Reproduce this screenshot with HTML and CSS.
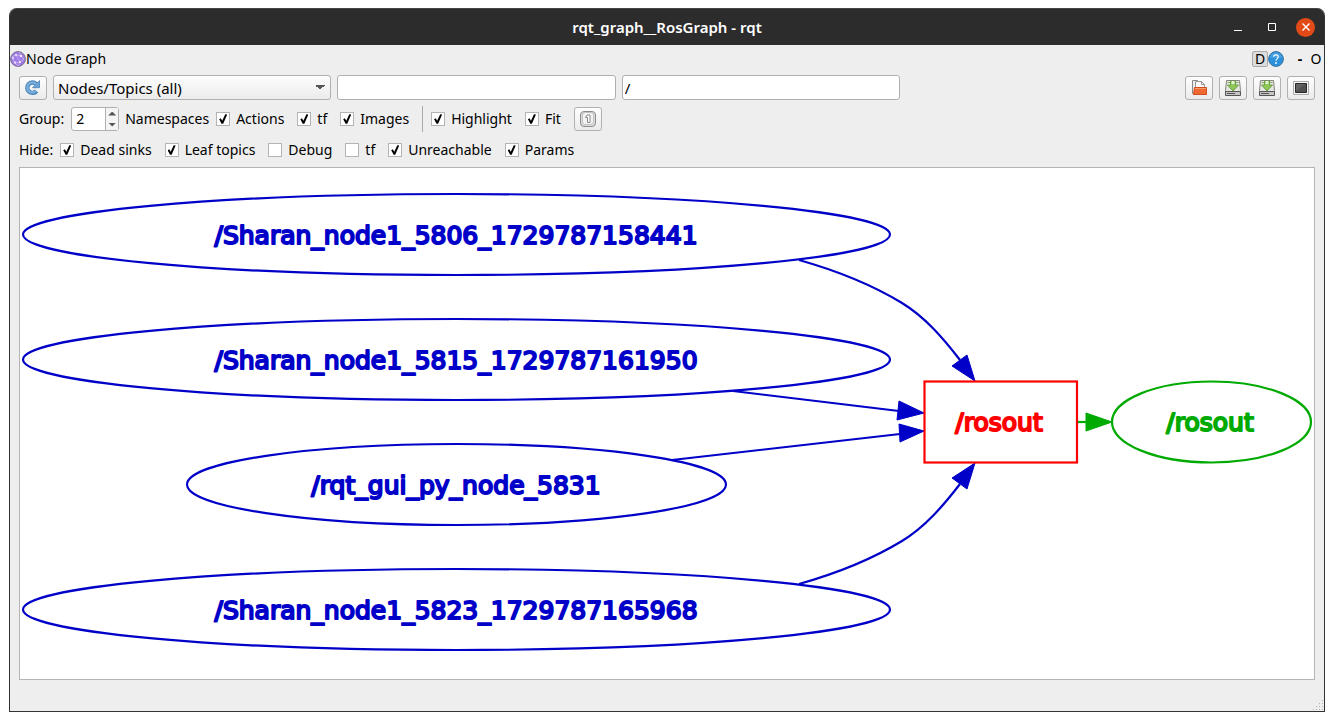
FILE: index.html
```html
<!DOCTYPE html>
<html lang="en">
<head>
<meta charset="utf-8">
<title>rqt_graph__RosGraph - rqt</title>
<link rel="stylesheet" href="styles.css">
</head>
<body>
<div class="window">
  <header class="titlebar">
    <h1 class="title">rqt_graph__RosGraph - rqt</h1>
    <div class="window-buttons">
      <button class="wbtn" aria-label="Minimize"><svg width="10" height="10" viewBox="0 0 10 10"><path d="M1 8.500h8" stroke="#fff" fill="none"/></svg></button>
      <button class="wbtn" aria-label="Maximize"><svg width="10" height="10" viewBox="0 0 10 10"><path d="M1.500 1.500h7v7h-7z" stroke="#fff" fill="none"/></svg></button>
      <button class="wbtn close" aria-label="Close"><svg width="10" height="10" viewBox="0 0 10 10"><path d="M1.500 1.500l7 7m0-7l-7 7" stroke="#fff" stroke-width="1.400" fill="none"/></svg></button>
    </div>
  </header>

  <div class="dock-title">
    <svg class="dock-icon" width="16" height="16" viewBox="0 0 16 16">
      <circle cx="8" cy="8" r="7.400" fill="#a17be6" stroke="#77718a"/>
      <path d="M2 6l4-2 5 1 3 3-4 3-5 1-3-6M6 4l4 7M9 1l2 4M5 12l3 3 2-4" fill="none" stroke="#d3c2f5" stroke-width=".7"/>
      <g fill="#f1eafd"><circle cx="6" cy="4" r="1"/><circle cx="11" cy="5" r="1.200"/><circle cx="10" cy="11" r="1"/><circle cx="5" cy="11.500" r="1.100"/><circle cx="3" cy="7" r=".9"/></g>
    </svg>
    <h2 class="dock-name">Node Graph</h2>
    <div class="dock-buttons">
      <button class="dbtn">D</button>
      <button class="help" aria-label="Help"><svg width="16" height="16" viewBox="0 0 16 16"><circle cx="8" cy="8" r="7.400" fill="#2c91dc" stroke="#3c719b"/><path d="M2 7a6 5.500 0 0 1 12 0z" fill="#5bb0ea" opacity=".5"/><path d="M5.700 5.800C5.800 3.200 10.400 3.300 10.300 6 10.200 7.600 8 7.700 8 9.700" fill="none" stroke="#fff" stroke-width="1.200"/><circle cx="8" cy="12" r=".9" fill="#fff"/></svg></button>
      <button class="flat dash">-</button>
      <button class="flat">O</button>
    </div>
  </div>

  <main class="panel">
    <div class="toolbar">
      <button class="tool" aria-label="Refresh"><svg width="18" height="18" viewBox="0 0 18 18"><path d="M12.500 12A5.200 5.200 0 1 1 12 4.900" fill="none" stroke="#4a83b8" stroke-width="4.400"/><path d="M15.500 1.500v7.200H8.500z" fill="#6aa3d5" stroke="#4a83b8" stroke-width=".8"/><path d="M12 11.800A5 5 0 1 1 12 5.200" fill="none" stroke="#78aedc" stroke-width="2.600"/></svg></button>
      <select class="field combo" aria-label="Graph type"><option>Nodes/Topics (all)</option></select>
      <input class="field" type="text" aria-label="Node filter">
      <input class="field" type="text" aria-label="Topic filter" value="/">
      <span></span>
      <button class="tool" aria-label="Load from file"><svg width="18" height="18" viewBox="0 0 18 18"><path d="M2.500 14.500v-13h5l2 2v11z" fill="#eee" stroke="#8a8a8a"/><path d="M5.500 13V2.500h6L14.500 5.500V13z" fill="#fafafa" stroke="#999"/><path d="M11.500 2.500v3h3" fill="none" stroke="#999"/><path d="M4.500 8.500h12v7h-13z" fill="#ee6a32" stroke="#d14d1b"/><path d="M5 9.500h11" stroke="#f79a6c"/></svg></button>
      <button class="tool" aria-label="Save as DOT"><svg width="18" height="18" viewBox="0 0 18 18"><use href="#save"/></svg></button>
      <button class="tool" aria-label="Save as SVG"><svg width="18" height="18" viewBox="0 0 18 18"><g id="save"><path d="M2.500 1.500h13l1 10v4h-15v-4z" fill="#e4e4e0" stroke="#85877f"/><path d="M1.500 12.500h15v4h-15z" fill="#c4c4c4" stroke="#555"/><path d="M3 14.500h8" stroke="#555"/><path d="M3.500 3.500h11" stroke="#8cae6b"/><path d="M6.500 2h5v4h3L9 12 3.500 6h3z" fill="#8fc858" stroke="#5b9430" stroke-width=".8"/><path d="M7.500 2v3h3V2" fill="#e5f2d5"/></g></svg></button>
      <button class="tool" aria-label="Save as image"><svg width="18" height="18" viewBox="0 0 18 18"><path d="M1.500 2.500h15v13h-15z" fill="#f5f5f5" stroke="#aaa"/><path d="M3.500 4.500h11v9h-11z" fill="#505050" stroke="#292929"/><path d="M4 5h9l-9 7z" fill="#777" opacity=".5"/></svg></button>
    </div>

    <div class="options">
      <label class="caption" for="group">Group:</label>
      <span class="spin">
        <input id="group" class="spin-value" type="text" value="2">
        <span class="spin-steps"><button class="step up" aria-label="Increase"></button><button class="step down" aria-label="Decrease"></button></span>
      </span>
      <span class="caption">Namespaces</span>
      <label class="check"><input type="checkbox" checked>Actions</label>
      <label class="check"><input type="checkbox" checked>tf</label>
      <label class="check"><input type="checkbox" checked>Images</label>
      <span class="separator"></span>
      <label class="check"><input type="checkbox" checked>Highlight</label>
      <label class="check"><input type="checkbox" checked>Fit</label>
      <button class="tool" aria-label="Fit in view"><svg width="18" height="18" viewBox="0 0 18 18"><rect x="1.500" y="1.500" width="15" height="15" rx="3.500" fill="#ddd" stroke="#8c8c8c"/><rect x="3.500" y="2.500" width="11" height="12" rx="2.500" fill="#f4f4f4" stroke="#c3c3c3"/><path d="M6.500 7.500l1.500-2.500h3v7.500h-2.500v-5z" fill="#fff" stroke="#888"/></svg></button>
    </div>

    <div class="options hide-row">
      <span class="caption">Hide:</span>
      <label class="check"><input type="checkbox" checked>Dead sinks</label>
      <label class="check"><input type="checkbox" checked>Leaf topics</label>
      <label class="check"><input type="checkbox">Debug</label>
      <label class="check"><input type="checkbox">tf</label>
      <label class="check"><input type="checkbox" checked>Unreachable</label>
      <label class="check"><input type="checkbox" checked>Params</label>
    </div>

    <div class="view">
      <svg class="graph" viewBox="20 168 1294 511" role="img" aria-label="ROS node graph">
        <g class="node">
          <ellipse cx="456.500" cy="234.500" rx="433.500" ry="40.500"/>
          <text x="456" y="244">/Sharan_node1_5806_1729787158441</text>
          <ellipse cx="456.500" cy="359.500" rx="433.500" ry="40.500"/>
          <text x="456" y="369">/Sharan_node1_5815_1729787161950</text>
          <ellipse cx="456.500" cy="484.500" rx="269.500" ry="40.500"/>
          <text x="456" y="494">/rqt_gui_py_node_5831</text>
          <ellipse cx="456.500" cy="609.500" rx="433.500" ry="40.500"/>
          <text x="456" y="619">/Sharan_node1_5823_1729787165968</text>
          <path d="M799 260C838 271 874 286 902 303C925 317 943 338 960 360"/>
          <path d="M733 391L899 411M672 460L900 434"/>
          <path d="M799 584C838 573 874 558 902 541C925 527 943 506 960 484"/>
          <path class="head" d="M975 381L952 366L967 355zM924 413L899 401L897 420zM924 431L899 424L900 442zM975 463L952 478L967 489z"/>
        </g>
        <g class="node topic">
          <rect x="924.500" y="381.500" width="152.500" height="81"/>
          <text x="999" y="431">/rosout</text>
        </g>
        <g class="node green">
          <ellipse cx="1211.500" cy="422" rx="99.500" ry="40.500"/>
          <text x="1210" y="431">/rosout</text>
          <path d="M1078 422H1088"/>
          <path class="head" d="M1112 422L1086 413V431z"/>
        </g>
      </svg>
    </div>
  </main>

  <footer class="statusbar">
    <svg width="12" height="12" viewBox="0 0 12 12" fill="#b4b4b4"><path d="M10 1h1v1h-1zM10 4h1v1h-1zM10 7h1v1h-1zM10 10h1v1h-1zM7 4h1v1h-1zM7 7h1v1h-1zM7 10h1v1h-1zM4 7h1v1h-1zM4 10h1v1h-1zM1 10h1v1h-1z"/></svg>
  </footer>
</div>
</body>
</html>
```

FILE: styles.css
```css
* { box-sizing: border-box; }

body {
  margin: 0;
  padding: 8px 9px 9px;
  min-height: 100vh;
  display: flex;
  background: #fff;
  color: #000;
  font: 14px/20px "Noto Sans", "Open Sans", sans-serif;
}

button, input, select { font: inherit; color: inherit; margin: 0; padding: 0; }
button { display: flex; align-items: center; justify-content: center; border: 0; background: none; }
svg { flex: none; }

.window {
  flex: 1;
  display: flex;
  flex-direction: column;
  background: #eee;
  border: 1px solid #333;
  border-top: 0;
  border-radius: 8px 8px 0 0;
}

.titlebar {
  display: grid;
  grid-template-columns: 1fr auto 1fr;
  align-items: center;
  height: 37px;
  padding: 0 9px;
  background: #2c2c2c;
  border-top: 1px solid #444;
  border-radius: 7px 7px 0 0;
  color: #fff;
}
.title { grid-column: 2; margin: 0; font-size: 15px; line-height: 20px; font-weight: 600; }
.window-buttons { display: flex; justify-content: flex-end; gap: 15px; }
.wbtn { width: 19px; height: 19px; border-radius: 50%; }
.close { background: #e24b18; }

.dock-title { display: flex; align-items: center; height: 28px; }
.dock-name { margin: 0; font-size: 14px; line-height: 20px; font-weight: 400; }
.dock-buttons { display: flex; align-items: center; margin-left: auto; }
.dbtn { width: 16px; height: 16px; border: 1px solid #aaa; border-radius: 2px; background: #dcdcdc; }
.flat { width: 16px; height: 16px; }
.dash { margin-left: 8px; font-weight: 700; }

.panel { flex: 1; display: flex; flex-direction: column; padding: 2px 9px 0; }

.toolbar {
  display: grid;
  grid-template-columns: 28px repeat(3, 51fr) 50fr repeat(4, 28px);
  align-items: center;
  gap: 6px;
}
.tool {
  width: 28px;
  height: 24px;
  border: 1px solid #b0b0b0;
  border-radius: 3px;
  background: linear-gradient(#fefefe, #ebebeb);
}
.field {
  width: 100%;
  height: 25px;
  padding: 0 2px;
  border: 1px solid #b0b0b0;
  border-radius: 3px;
  background: #fff;
  font-size: 15px;
}
.combo {
  appearance: none;
  padding: 0 20px 0 4px;
  background:
    linear-gradient(to bottom left, #555 50%, transparent 0) right 10px center / 5px 5px no-repeat,
    linear-gradient(to bottom right, #555 50%, transparent 0) right 5px center / 5px 5px no-repeat,
    linear-gradient(#fdfdfd, #ebebeb);
}

.options { display: flex; align-items: center; height: 26px; margin-top: 6px; }
.hide-row { height: 30px; margin: 3px 0 2px; }
.caption { margin-right: 7px; }

.spin {
  display: flex;
  width: 48px;
  height: 24px;
  margin-right: 6px;
  border: 1px solid #b0b0b0;
  border-radius: 3px;
  background: #fff;
}
.spin-value { width: 33px; padding: 0 4px; border: 0; background: none; }
.spin-steps { flex: 1; display: flex; flex-direction: column; border-left: 1px solid #b0b0b0; background: #f4f4f4; }
.step { flex: 1; }
.step::before { content: ""; width: 8px; height: 4px; background: #555; }
.up::before { clip-path: polygon(50% 0, 100% 100%, 0 100%); }
.down::before { clip-path: polygon(0 0, 100% 0, 50% 100%); }

.check { display: flex; align-items: center; gap: 6px; margin-right: 13px; }
.check input {
  appearance: none;
  display: grid;
  place-items: center;
  width: 14px;
  height: 14px;
  border: 1px solid #b4b4b4;
  background: #fff;
}
.check input:checked::before {
  content: "";
  width: 8px;
  height: 10px;
  background: #000;
  clip-path: polygon(0 52%, 20% 42%, 38% 68%, 76% 2%, 100% 4%, 50% 98%, 30% 98%);
}
.separator { width: 1px; height: 26px; margin-right: 8px; background: #aaa; }

.view { flex: 1; display: flex; border: 1px solid #b4b4b4; background: #fff; }
.graph { flex: 1; width: 100%; display: block; }
.node { fill: none; stroke: #0000c8; stroke-width: 2.2px; }
.node text {
  fill: #0000c8;
  stroke-width: 2px;
  stroke-linejoin: round;
  text-anchor: middle;
  font-family: "DejaVu Sans", sans-serif;
  font-size: 25px;
}
.head { fill: #0000c8; stroke-width: 1px; }
.topic { stroke: #f00; }
.topic text { fill: #f00; }
.green { stroke: #00aa00; }
.green text, .green .head { fill: #00aa00; }

.statusbar { display: flex; align-items: flex-end; justify-content: flex-end; height: 31px; }
```
